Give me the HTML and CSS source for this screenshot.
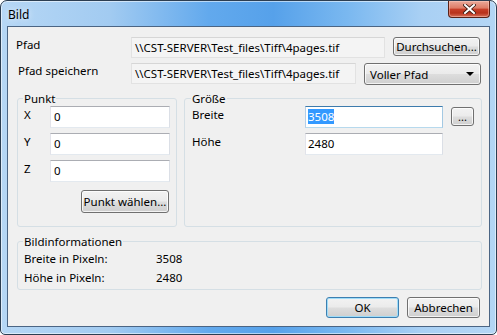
FILE: index.html
```html
<!DOCTYPE html>
<html lang="de">
<head>
    <meta charset="UTF-8">
    <meta name="viewport" content="width=device-width, initial-scale=1.0">
    <title>Bild</title>
    <link rel="stylesheet" href="styles.css">
</head>
<body>
    <div class="window">
        <div class="titlebar">
            <span class="title">Bild</span>
            <button class="close" type="button">
                <svg width="13" height="10" viewBox="0 0 13 10">
                    <path d="M2 1 L11 9 M11 1 L2 9" stroke="#3a1a12" stroke-width="3.6" stroke-linecap="square"/>
                    <path d="M2 1 L11 9 M11 1 L2 9" stroke="#ffffff" stroke-width="2" stroke-linecap="square"/>
                </svg>
            </button>
        </div>
        <div class="client">
            <div class="row row-path">
                <label class="row-label">Pfad</label>
                <div class="field readonly path-field">\\CST-SERVER\Test_files\Tiff\4pages.tif</div>
                <button class="btn browse-btn" type="button">Durchsuchen...</button>
            </div>
            <div class="row row-save">
                <label class="row-label save-label">Pfad speichern</label>
                <div class="field readonly save-field">\\CST-SERVER\Test_files\Tiff\4pages.tif</div>
                <div class="btn combo">
                    <span>Voller Pfad</span>
                    <span class="arrow"></span>
                </div>
            </div>

            <div class="groups">
                <fieldset class="group point-group">
                    <legend>Punkt</legend>
                    <div class="coord-row">
                        <span class="coord-label">X</span>
                        <div class="field coord-field">0</div>
                    </div>
                    <div class="coord-row">
                        <span class="coord-label">Y</span>
                        <div class="field coord-field">0</div>
                    </div>
                    <div class="coord-row">
                        <span class="coord-label">Z</span>
                        <div class="field coord-field">0</div>
                    </div>
                    <button class="btn pick-btn" type="button">Punkt wählen...</button>
                </fieldset>
                <fieldset class="group size-group">
                    <legend>Größe</legend>
                    <div class="size-row">
                        <span class="size-label">Breite</span>
                        <div class="field size-field focused"><span class="selection">3508</span></div>
                        <button class="btn dots-btn" type="button">...</button>
                    </div>
                    <div class="size-row">
                        <span class="size-label">Höhe</span>
                        <div class="field size-field">2480</div>
                    </div>
                </fieldset>
            </div>

            <fieldset class="group info-group">
                <legend>Bildinformationen</legend>
                <div class="info-row">
                    <span class="info-label">Breite in Pixeln:</span>
                    <span>3508</span>
                </div>
                <div class="info-row">
                    <span class="info-label">Höhe in Pixeln:</span>
                    <span>2480</span>
                </div>
            </fieldset>

            <div class="actions">
                <button class="btn default-btn" type="button">OK</button>
                <button class="btn" type="button">Abbrechen</button>
            </div>
        </div>
    </div>
</body>
</html>
```

FILE: styles.css
```css
* {
    box-sizing: border-box;
}
body {
    margin: 0;
    font-family: "Noto Sans", "Open Sans", sans-serif;
    font-size: 11.5px;
    color: #000;
    background: #fff;
}
.window {
    width: 497px;
    height: 335px;
    padding: 0 6px 7px 6px;
    border: 1px solid #2c3e52;
    border-radius: 7px 7px 5px 5px;
    background: linear-gradient(to right, #b6d7f5 0%, #a2cbf1 22%, #62a9ed 42%, #56a1ea 55%, #7ab8f0 70%, #a9d0f4 85%, #b4d6f5 100%);
    box-shadow: inset 0 0 0 1px rgba(255,255,255,0.55);
}
.titlebar {
    height: 25px;
    display: flex;
    justify-content: space-between;
    align-items: flex-start;
}
.title {
    padding: 6px 0 0 1px;
    line-height: 15px;
    font-size: 12px;
    text-shadow: 0 0 6px rgba(255,255,255,0.9);
}
.close {
    width: 42px;
    height: 17px;
    padding: 0;
    border: 1px solid #5a2218;
    border-top: none;
    border-radius: 0 0 4px 4px;
    background: linear-gradient(#e9a99a 0%, #dd7b65 45%, #c7402a 50%, #b8321c 75%, #d8715a 100%);
    box-shadow: inset 0 0 0 1px rgba(255,210,200,0.45);
    display: flex;
    align-items: center;
    justify-content: center;
}
.client {
    height: 301px;
    border: 1px solid #4b6584;
    background: #f0f0f0;
    display: flex;
    flex-direction: column;
}
.row {
    display: flex;
    align-items: flex-start;
}
.row-path {
    margin-top: 10px;
    padding-left: 8px;
}
.row-save {
    margin-top: 5px;
    padding-left: 10px;
}
.row-label {
    width: 115px;
    line-height: 15px;
}
.save-label {
    width: 113px;
}
.field {
    height: 22px;
    padding: 0 3px;
    line-height: 20px;
    border: 1px solid;
    border-color: #abadb3 #dbdfe6 #e3e9ef #e2e3ea;
    background: #fff;
    white-space: nowrap;
    overflow: hidden;
}
.readonly {
    height: 21px;
    line-height: 19px;
    border-color: #d6d6d6 #e2e2e2 #e2e2e2 #e2e2e2;
    background: #f4f4f4;
}
.path-field {
    width: 254px;
}
.save-field {
    width: 225px;
}
.btn {
    height: 21px;
    padding: 0;
    border: 1px solid #707070;
    border-radius: 3px;
    background: linear-gradient(#f2f2f2 0%, #ebebeb 48%, #dddddd 52%, #cfcfcf 100%);
    box-shadow: inset 0 0 0 1px rgba(255,255,255,0.75);
    font-family: inherit;
    font-size: 11.5px;
    color: #000;
    line-height: 17px;
    white-space: nowrap;
}
.browse-btn {
    width: 87px;
    height: 19px;
    margin-left: 8px;
    line-height: 16px;
}
.combo {
    width: 117px;
    height: 22px;
    margin-left: 8px;
    padding: 0 6px 0 5px;
    display: flex;
    align-items: center;
    justify-content: space-between;
}
.arrow {
    width: 0;
    height: 0;
    border-left: 4px solid transparent;
    border-right: 4px solid transparent;
    border-top: 4px solid #000;
}
.groups {
    display: flex;
    gap: 7px;
    margin: 6px 7px 0 9px;
}
.group {
    margin: 0;
    padding: 0 6px 0 6px;
    border: 1px solid #d5dfe5;
    border-radius: 3px;
    display: flex;
    flex-direction: column;
    min-width: 0;
}
.group legend {
    padding: 0 1px;
    margin-left: -1px;
    line-height: 15px;
}
.point-group {
    width: 160px;
    padding-bottom: 13px;
}
.coord-row {
    display: flex;
    align-items: flex-start;
    margin-bottom: 5px;
}
.coord-label {
    width: 26px;
    padding-top: 1px;
    line-height: 15px;
}
.coord-field {
    width: 120px;
}
.pick-btn {
    width: 88px;
    height: 23px;
    margin-top: 3px;
    margin-right: 1px;
    align-self: flex-end;
}
.size-group {
    flex: 1;
    padding-left: 7px;
}
.size-row {
    display: flex;
    align-items: flex-start;
    margin-bottom: 5px;
}
.size-label {
    width: 113px;
    padding-top: 1px;
    line-height: 15px;
}
.size-field {
    width: 138px;
    padding-left: 2px;
}
.focused {
    border-color: #3d7bad #a4c9e3 #b7d9ed #b5cfe7;
}
.selection {
    background: #3399ff;
    color: #fff;
}
.dots-btn {
    width: 23px;
    height: 19px;
    margin: 1px 0 0 8px;
    line-height: 14px;
    font-size: 11px;
}
.info-group {
    margin: 7px 7px 0 9px;
    padding-bottom: 2px;
}
.info-row {
    display: flex;
    line-height: 19px;
}
.info-label {
    width: 132px;
}
.actions {
    display: flex;
    justify-content: flex-end;
    gap: 8px;
    margin: 7px 9px 0 0;
}
.actions .btn {
    width: 73px;
}
.default-btn {
    border-color: #3c7fb1;
    box-shadow: inset 0 0 0 1px #9fdcf8;
}
```
